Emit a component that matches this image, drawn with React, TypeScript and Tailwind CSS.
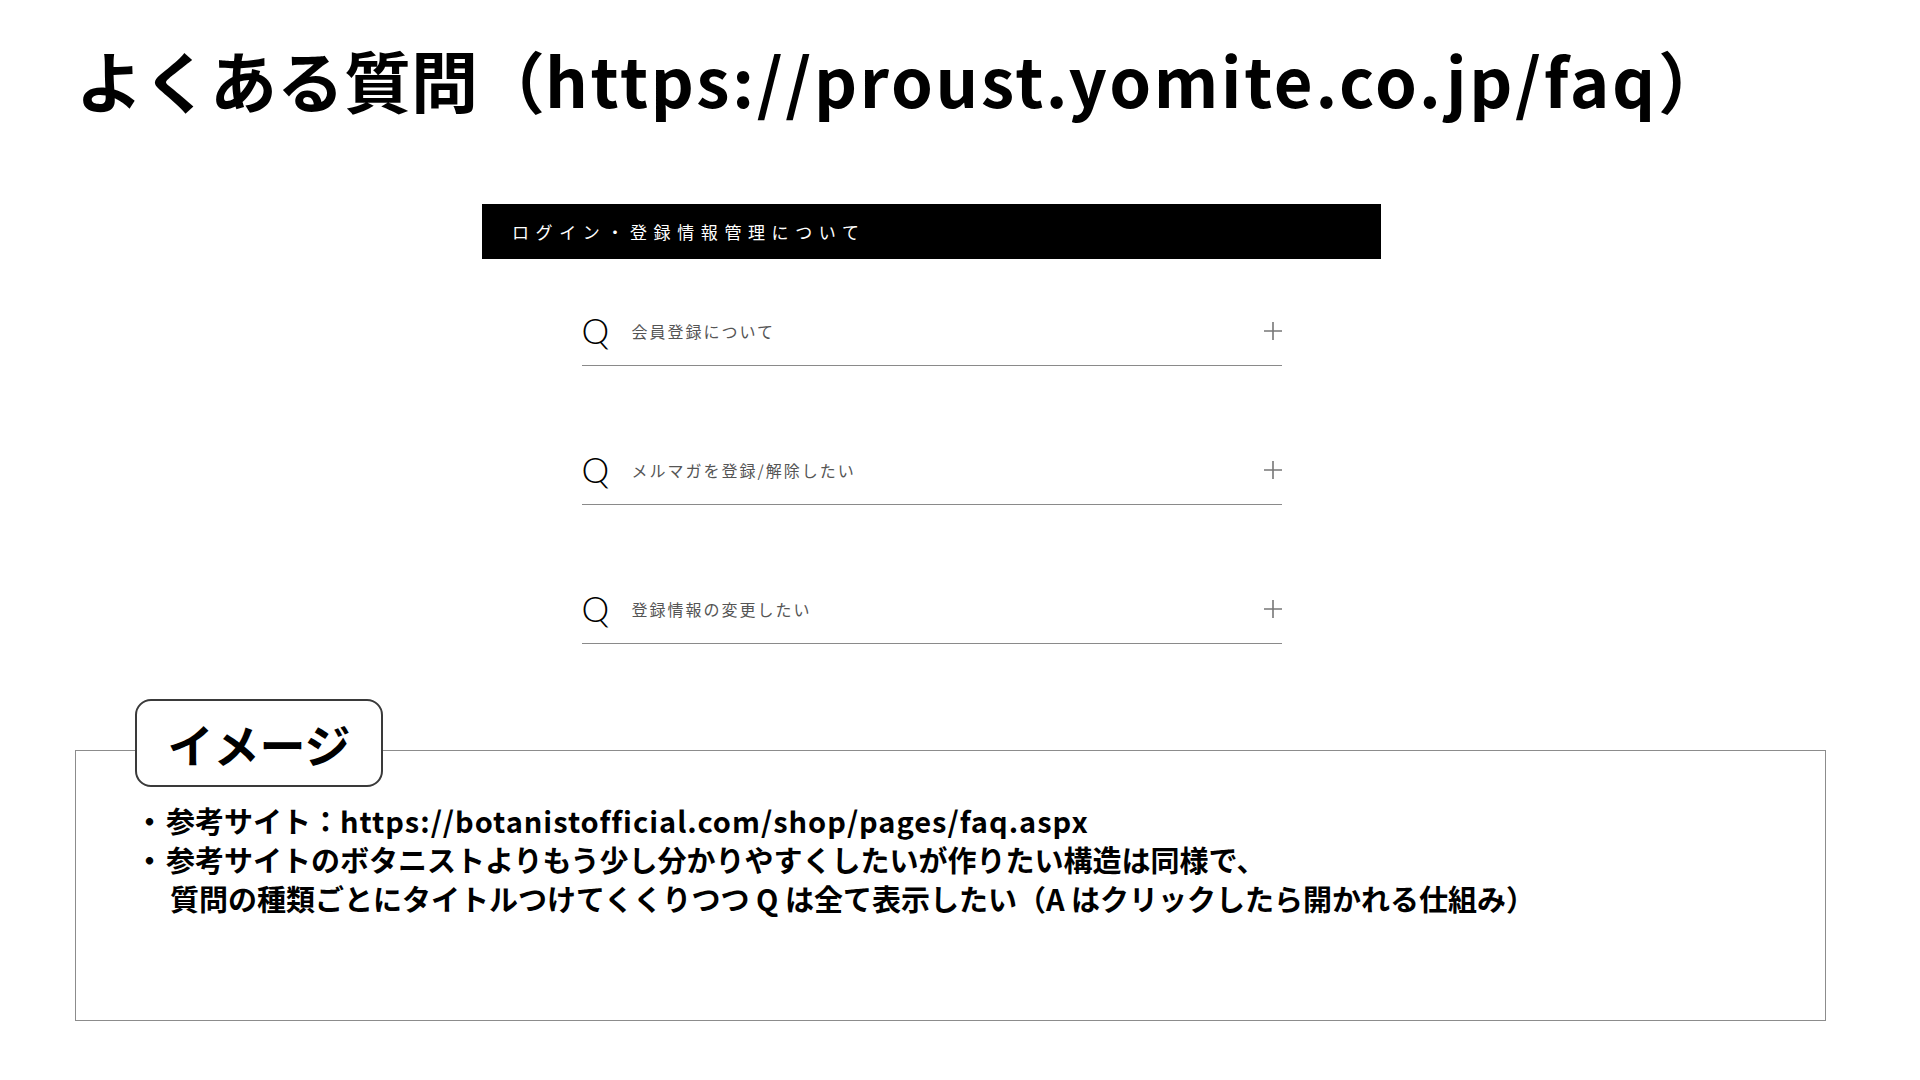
import React from "react";

const faqs = ["会員登録について", "メルマガを登録/解除したい", "登録情報の変更したい"];

function Plus() {
  return (
    <svg width="18" height="18" viewBox="0 0 18 18" className="shrink-0">
      <path d="M9 0V18M0 9H18" stroke="#777" strokeWidth="1.6" fill="none" />
    </svg>
  );
}

function Bullet() {
  return (
    <span className="inline-block w-[20px] overflow-visible whitespace-nowrap">
      <span className="inline-block ml-[-11px]">・</span>
    </span>
  );
}

export default function App() {
  return (
    <div
      className="w-[1920px] h-[1080px] bg-white text-black overflow-hidden"
      style={{ fontFamily: '"Noto Sans CJK JP", "Noto Sans", sans-serif' }}
    >
      <h1 className="pt-[45px] pl-[76px] text-[67px] font-bold leading-none whitespace-nowrap">
        よくある質問（<span className="tracking-[2.7px]">https://proust.yomite.co.jp/faq</span>）
      </h1>

      <div className="ml-[482px] mt-[92px] w-[899px]">
        <div className="h-[55px] bg-black flex items-center pl-[30px]">
          <span className="text-white text-[17px] tracking-[6.6px] leading-none">
            ログイン・登録情報管理について
          </span>
        </div>
        <div className="w-[700px] mx-auto mt-[42px] flex flex-col gap-[74px]">
          {faqs.map((q) => (
            <div key={q} className="h-[65px] pb-[5px] flex items-center border-b border-[#8a8a8a]">
              <span
                className="text-[35px] font-light leading-none w-[50px] text-black"
                style={{ fontFamily: 'Lato, "Liberation Sans", sans-serif' }}
              >
                Q
              </span>
              <span className="flex-1 text-[16px] text-[#555] tracking-[2px] leading-none">{q}</span>
              <Plus />
            </div>
          ))}
        </div>
      </div>

      <div className="relative ml-[75px] mt-[106px] w-[1751px] h-[271px] border-[1.5px] border-[#8c8c8c]">
        <div className="absolute left-[59px] top-[-52px] w-[248px] h-[88px] bg-white border-[2.5px] border-[#3a3a3a] rounded-[16px] flex items-center justify-center">
          <span className="text-[46px] font-bold leading-none">イメージ</span>
        </div>
        <div className="pt-[50px] pl-[70px] text-[29px] font-bold leading-[39px] whitespace-nowrap">
          <div>
            <Bullet />
            参考サイト：<span className="tracking-[1px]">https://botanistofficial.com/shop/pages/faq.aspx</span>
          </div>
          <div>
            <Bullet />
            参考サイトのボタニストよりもう少し分かりやすくしたいが作りたい構造は同様で、
          </div>
          <div className="pl-[24px]">
            質問の種類ごとにタイトルつけてくくりつつ Q は全て表示したい（A はクリックしたら開かれる仕組み）
          </div>
        </div>
      </div>
    </div>
  );
}
